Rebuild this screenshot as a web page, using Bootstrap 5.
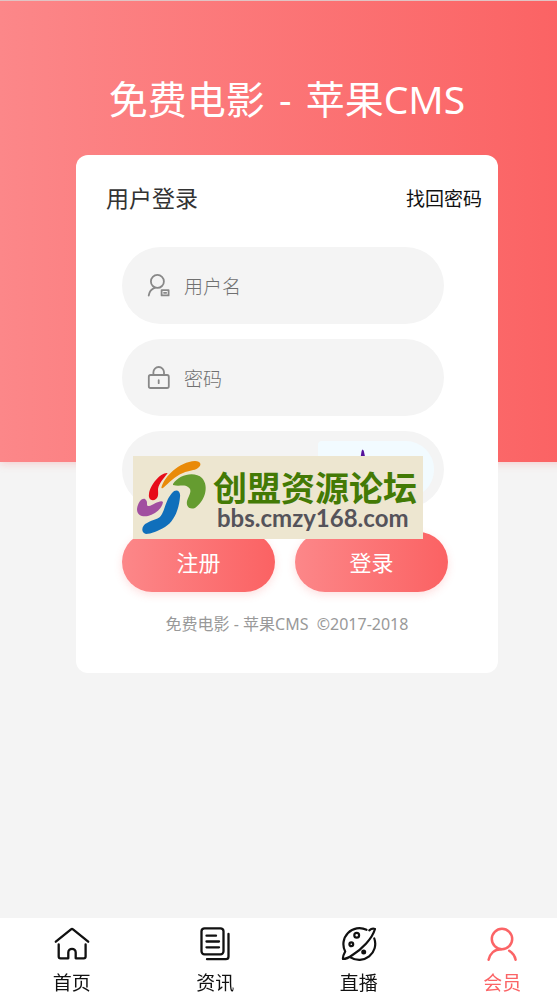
<!DOCTYPE html>
<html lang="zh-CN">
<head>
<meta charset="utf-8">
<meta name="viewport" content="width=device-width, initial-scale=1">
<title>用户登录</title>
<link href="https://cdn.jsdelivr.net/npm/bootstrap@5.3.0/dist/css/bootstrap.min.css" rel="stylesheet">
<style>
  :root { --scrollbar: 17px; --brand: #fb6466; --fade: linear-gradient(90deg, #fc8789, #fb6263); }
  html { overflow-x: hidden; }
  body { background: #f4f4f4; color: #111; font-family: "Noto Sans", "Noto Sans CJK SC", sans-serif; overflow-x: hidden; }
  /* content is centred on the full width, scrollbar gutter included */
  .page-wide { width: calc(100% + var(--scrollbar)); }
  .hero { background: var(--fade); border-top: 1px solid #e0c4c4; height: 462px; box-shadow: 0 2px 8px rgba(251, 100, 102, .25); }
  .site-title { font-size: 39px; line-height: 48px; padding-top: 74px; }
  .login-panel { margin: -307px 76px 96px; border-radius: 12px; padding: 0 54px 37px 46px; }
  .panel-head { height: 88px; margin: 0 -38px 4px -16px; }
  .panel-title { font-size: 23px; color: #333; }
  .forgot { font-size: 19px; color: #111; }
  .pill { height: 77px; background: #f4f4f4; margin-bottom: 15px; padding-left: 25px; color: #888; }
  .pill input { font-size: 19px; font-weight: 300; padding: 3px 0 0; margin-left: 13px; }
  .pill input::placeholder { color: #707070; }
  .captcha { width: 116px; height: 57px; margin-right: 10px; background: #f2fbff; border-radius: 4px 28px 28px 4px; }
  .actions { margin: 24px -4px 0 0; gap: 20px; }
  .btn-fade { height: 60px; background: var(--fade); font-size: 22px; box-shadow: 0 3px 8px rgba(251, 100, 102, .2); }
  .copyright { font-size: 16px; line-height: 24px; margin: 20px -8px 0 0; color: #999; white-space: pre; }
  .sponsor { left: 57px; top: 301px; width: 290px; height: 83px; background: #ede6d0; }
  .sponsor-name { font-size: 34px; line-height: 36px; font-weight: 700; color: #437a05; }
  .sponsor-url { font-family: Lato, sans-serif; font-size: 24px; line-height: 24px; font-weight: 700; color: #55535a; }
  .tabs { height: 77px; }
  .tabs a { color: #111; font-size: 19px; line-height: 24px; padding-top: 8px; }
  .tabs a.current { color: var(--brand); }
  .line-icon { flex-shrink: 0; fill: none; stroke: currentColor; stroke-linecap: round; stroke-linejoin: round; }
  .tabs .line-icon { margin-bottom: 9px; }
</style>
</head>
<body>
<header class="hero page-wide text-center text-white">
  <h1 class="site-title fw-normal m-0">免费电影 <span class="mx-1">-</span> 苹果CMS</h1>
</header>

<main class="page-wide d-flow-root">
  <section class="login-panel bg-white position-relative">
    <div class="panel-head d-flex align-items-center justify-content-between">
      <h2 class="panel-title fw-normal m-0">用户登录</h2>
      <a class="forgot text-decoration-none" href="#">找回密码</a>
    </div>
    <form>
      <div class="pill rounded-pill d-flex align-items-center">
        <svg class="line-icon" width="24" height="24" viewBox="0 0 24 24" stroke-width="1.8" aria-hidden="true"><circle cx="10.4" cy="7.4" r="6.5"/><path d="M1.7 21.5C2.3 17.3 4.8 14.8 8 13.6"/><path d="M14.6 16.2h7v5.2h-7zM17 18.8h2.2"/></svg>
        <input class="form-control border-0 bg-transparent shadow-none" type="text" placeholder="用户名" aria-label="用户名">
      </div>
      <div class="pill rounded-pill d-flex align-items-center">
        <svg class="line-icon" width="24" height="24" viewBox="0 0 24 24" stroke-width="1.8" aria-hidden="true"><rect x="1.8" y="9" width="20" height="13" rx="1.8"/><path d="M6.4 9V6.300a5.300 5.300 0 0 1 10.600 0v2.700M11.700 14.200v3"/></svg>
        <input class="form-control border-0 bg-transparent shadow-none" type="password" placeholder="密码" aria-label="密码">
      </div>
      <div class="pill rounded-pill d-flex align-items-center mb-0">
        <input class="form-control border-0 bg-transparent shadow-none" type="text" aria-label="验证码">
        <svg class="captcha flex-shrink-0" viewBox="0 0 116 57" aria-hidden="true"><path d="M42 20l1.600-10q1-3 2.200 0L48 20z" fill="#56129b"/></svg>
      </div>
      <div class="actions d-flex">
        <button class="btn btn-fade rounded-pill border-0 text-white flex-fill" type="button">注册</button>
        <button class="btn btn-fade rounded-pill border-0 text-white flex-fill" type="submit">登录</button>
      </div>
    </form>
    <p class="copyright text-center mb-0">免费电影 - 苹果CMS  ©2017-2018</p>

    <div class="sponsor position-absolute d-flex align-items-center">
      <svg class="flex-shrink-0" width="80" height="83" viewBox="0 0 80 83" aria-hidden="true">
        <path fill="#e98a08" d="M28.500 31C32 20 46 6 62 5C68 5 69 9 65 12C61 15 56 14 50 17C42 20 36 27 30 32Q28 33 28.500 31Z"/>
        <path fill="#e70c19" d="M34 17C27 17 17 29 16 38C15 43 19 46 23 43C26 41 25 36 25 33C26 27 31 22 34 18Q35 16.500 34 17Z"/>
        <path fill="#659c30" d="M40 28C46 18 62 15 69 22C77 31 71 46 62 52C56 54 53 50 54 45C56 39 60 34 55 31C51 28 46 31 40 29Z"/>
        <path fill="#a14fa0" d="M12 43C8 42 5 47 4 53C4 60 10 61 15 60C22 58 29 53 30 46C28 43 20 49 16 50C12 50 16 46 12 43Z"/>
        <path fill="#106fbb" d="M39 37C43 32 48 35 47 41C46 52 42 65 32 71C25 75 18 78 13 78C7 76 9 69 14 67C20 63 26 64 29 58C33 50 33 44 39 37Z"/>
      </svg>
      <div class="text-nowrap pt-1">
        <div class="sponsor-name">创盟资源论坛</div>
        <div class="sponsor-url ps-1">bbs.cmzy168.com</div>
      </div>
    </div>
  </section>
</main>

<nav class="tabs page-wide fixed-bottom bg-white d-flex text-center" aria-label="主导航">
  <a class="col-3 d-flex flex-column align-items-center text-decoration-none" href="#">
    <svg class="line-icon" width="36" height="36" viewBox="0 0 36 36" stroke-width="2.3" aria-hidden="true"><path d="M1.800 15.700L17 3.400q1-.8 2 0L34.200 15.700M4.700 18.500V30.500q0 1.800 1.800 1.800H14.300V26.500a3.700 3.700 0 0 1 7.400 0V32.300h8.100q1.800 0 1.800-1.800V18.500"/></svg>
    首页</a>
  <a class="col-3 d-flex flex-column align-items-center text-decoration-none" href="#">
    <svg class="line-icon" width="36" height="36" viewBox="0 0 36 36" stroke-width="2.3" aria-hidden="true"><rect x="4.500" y="2.300" width="22" height="26" rx="3"/><path d="M31.500 8V30.500q0 2.700-2.700 2.700H10M9.500 9.700h9.500M9.500 15.500h12.500M9.500 21.300h12.500"/></svg>
    资讯</a>
  <a class="col-3 d-flex flex-column align-items-center text-decoration-none" href="#">
    <svg class="line-icon" width="36" height="36" viewBox="0 0 36 36" stroke-width="2.200" aria-hidden="true"><path d="M25.500 3.800A16 16 0 0 0 4.200 25.500Q1.500 30.500 2 33Q6 33 11.500 29C21 23 31 13 34 3Q31 2 28.300 4.300M33.300 12.500A16 16 0 0 1 9.500 31.300"/><circle cx="15.700" cy="9.300" r="2.400"/><circle cx="10.300" cy="18.300" r="1.900"/><circle cx="22.700" cy="26" r="1.400" fill="currentColor"/></svg>
    直播</a>
  <a class="current col-3 d-flex flex-column align-items-center text-decoration-none" href="#" aria-current="page">
    <svg class="line-icon" width="36" height="36" viewBox="0 0 36 36" stroke-width="2.500" aria-hidden="true"><circle cx="18" cy="13" r="10.200"/><path d="M4.600 33.700C6 27.500 10.500 23.300 17 23.200M25.200 24.700Q30.500 28 31.600 33.700"/></svg>
    会员</a>
</nav>
<script src="https://cdn.jsdelivr.net/npm/bootstrap@5.3.0/dist/js/bootstrap.bundle.min.js"></script>
</body>
</html>
